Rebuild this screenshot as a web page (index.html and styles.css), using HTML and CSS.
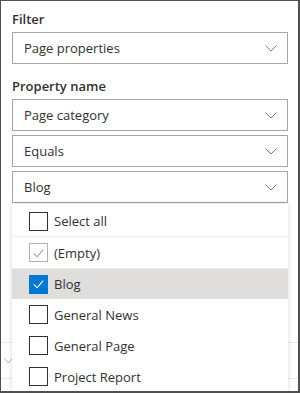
FILE: index.html
```html
<!DOCTYPE html>
<html lang="en">
<head>
    <meta charset="UTF-8">
    <meta name="viewport" content="width=device-width, initial-scale=1.0">
    <title>Filter</title>
    <link rel="stylesheet" href="styles.css">
</head>
<body>
    <div class="frame">
        <div class="form">
            <div class="label first">Filter</div>
            <div class="dropdown">
                <span>Page properties</span>
                <svg class="chevron" width="12" height="7" viewBox="0 0 12 7"><polyline points="0.5,0.5 6,6 11.5,0.5"/></svg>
            </div>

            <div class="label">Property name</div>
            <div class="dropdown">
                <span>Page category</span>
                <svg class="chevron" width="12" height="7" viewBox="0 0 12 7"><polyline points="0.5,0.5 6,6 11.5,0.5"/></svg>
            </div>
            <div class="dropdown gap">
                <span>Equals</span>
                <svg class="chevron" width="12" height="7" viewBox="0 0 12 7"><polyline points="0.5,0.5 6,6 11.5,0.5"/></svg>
            </div>
            <div class="dropdown gap">
                <span>Blog</span>
                <svg class="chevron" width="12" height="7" viewBox="0 0 12 7"><polyline points="0.5,0.5 6,6 11.5,0.5"/></svg>
            </div>
        </div>

        <!-- section underneath the open menu -->
        <div class="behind">
            <svg class="chevron small" width="9" height="6" viewBox="0 0 9 6"><polyline points="0.5,0.5 4.5,5 8.5,0.5"/></svg>
        </div>

        <!-- open dropdown menu -->
        <div class="menu">
            <div class="option first-option">
                <span class="box"></span>
                <span>Select all</span>
            </div>
            <div class="option">
                <span class="box disabled">
                    <svg width="18" height="18" viewBox="0 0 18 18"><polyline points="4,9.5 7.5,13 14,5.5"/></svg>
                </span>
                <span>(Empty)</span>
            </div>
            <div class="option selected">
                <span class="box checked">
                    <svg width="18" height="18" viewBox="0 0 18 18"><polyline points="4,9.5 7.5,13 14,5.5"/></svg>
                </span>
                <span>Blog</span>
            </div>
            <div class="option">
                <span class="box"></span>
                <span>General News</span>
            </div>
            <div class="option">
                <span class="box"></span>
                <span>General Page</span>
            </div>
            <div class="option">
                <span class="box"></span>
                <span>Project Report</span>
            </div>
        </div>
    </div>
</body>
</html>
```

FILE: styles.css
```css
body {
    margin: 0;
    font-family: "Open Sans", "Noto Sans", Arial, sans-serif;
    font-size: 13px;
    color: #323130;
    background: #ffffff;
}

.frame {
    position: relative;
    box-sizing: border-box;
    width: 300px;
    height: 393px;
    border: 2px solid #4f4f4f;
    border-top-width: 1px;
    border-left-width: 1px;
    overflow: hidden;
}

.form {
    padding: 8px 10px 0 11px;
}

.label {
    font-weight: 600;
    line-height: 20px;
    margin: 12px 0 3px 0;
}

.label.first {
    margin-top: 0;
}

.dropdown {
    box-sizing: border-box;
    height: 32px;
    border: 1px solid #a6a6a6;
    padding: 0 10px 0 11px;
    display: flex;
    align-items: center;
    justify-content: space-between;
}

.dropdown.gap {
    margin-top: 4px;
}

.chevron polyline {
    fill: none;
    stroke: #7a7a7a;
    stroke-width: 1;
}

.behind {
    margin-top: 139px;
    height: 35px;
    border-top: 1px solid #ebebeb;
    border-bottom: 1px solid #ebebeb;
    display: flex;
    align-items: center;
    padding-left: 3px;
}

.chevron.small polyline {
    stroke: #b0b0b0;
}

.menu {
    position: absolute;
    top: 203px;
    left: 11px;
    right: 10px;
    bottom: 0;
    padding-top: 2px;
    background: #ffffff;
    box-shadow: 0 0 5px rgba(0, 0, 0, 0.16);
}

.option {
    height: 31px;
    display: flex;
    align-items: center;
    padding-left: 17px;
    gap: 6px;
}

.option.first-option {
    box-sizing: border-box;
    border-bottom: 1px solid #f0efee;
}

.option.selected {
    background: #dfdedd;
    border-top: 1px solid #edebe9;
    box-sizing: border-box;
}

.box {
    box-sizing: border-box;
    width: 19px;
    height: 19px;
    border: 1px solid #323130;
    display: flex;
    align-items: center;
    justify-content: center;
    background: #ffffff;
}

.box svg polyline {
    fill: none;
    stroke-width: 1.2;
}

.box.disabled {
    border-color: #b3b0ad;
}

.box.disabled svg polyline {
    stroke: #a19f9d;
}

.box.checked {
    background: #0078d4;
    border-color: #0078d4;
}

.box.checked svg polyline {
    stroke: #ffffff;
}
```
